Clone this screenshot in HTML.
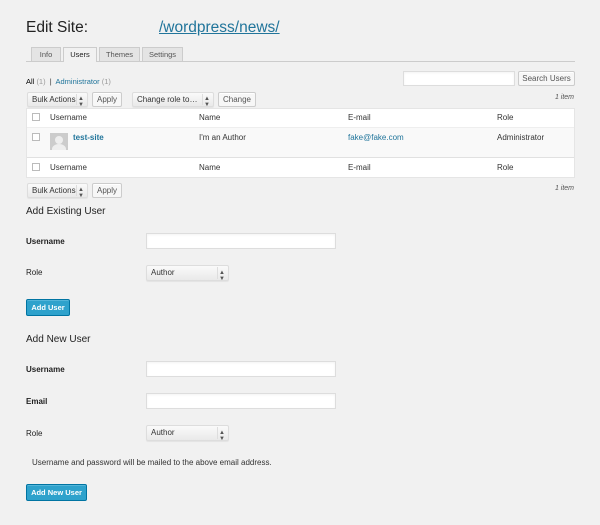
<!DOCTYPE html>
<html><head><style>
*{box-sizing:border-box;margin:0;padding:0}
body{width:600px;height:525px;background:#f1f1f1;font-family:"Liberation Sans",sans-serif;color:#333;position:relative;overflow:hidden;font-size:8px}
.a{position:absolute;white-space:nowrap}
.btn{position:absolute;background:#f7f7f7;border:1px solid #ccc;border-radius:2px;font-size:8px;color:#555;text-align:center;box-shadow:0 1px 0 #fff inset}
.sel{position:absolute;background:linear-gradient(#fafafa,#e9e9e9);border:1px solid #ddd;border-radius:2px;font-size:8px;color:#333;padding-left:4px;box-shadow:0 1px 1px rgba(0,0,0,.06)}
.sel:after{content:"";position:absolute;right:10px;top:1px;bottom:1px;border-left:1px solid #ddd}
.sel i{position:absolute;right:3px;top:0;font-style:normal;font-size:6px;line-height:6px;color:#555}
.inp{position:absolute;background:#fff;border:1px solid #ddd;box-shadow:inset 0 1px 2px rgba(0,0,0,.05)}
.tab{position:absolute;top:47px;height:14px;background:#e4e4e4;border:1px solid #ccc;border-bottom:none;font-size:7.5px;color:#555;text-align:center;line-height:13px}
.blue{position:absolute;background:#2ea2cc;border:1px solid #0074a2;border-radius:2px;color:#fff;font-size:7.5px;font-weight:bold;text-align:center;box-shadow:inset 0 1px 0 rgba(120,200,230,.5)}
.cb{position:absolute;width:8px;height:8px;border:1px solid #bbb;background:#fff}
.lbl{position:absolute;font-size:8px;font-weight:bold;color:#222}
</style></head><body>
<div class="a" style="left:26px;top:19px;font-size:15.5px;color:#222">Edit Site:</div>
<div class="a" style="left:159px;top:19px;font-size:15.5px;color:#21759b;text-decoration:underline">/wordpress/news/</div>
<div class="a" style="left:26px;top:61px;width:549px;border-top:1px solid #ccc"></div>
<div class="tab" style="left:31px;width:30px">Info</div>
<div class="tab" style="left:63px;width:34px;background:#f1f1f1;height:15px;color:#222">Users</div>
<div class="tab" style="left:99px;width:41px">Themes</div>
<div class="tab" style="left:142px;width:41px">Settings</div>
<div class="a" style="left:26px;top:77px;font-size:7.5px;color:#333"><b style="color:#000;font-weight:normal">All</b> <span style="color:#999">(1)</span> &nbsp;|&nbsp; <span style="color:#21759b">Administrator</span> <span style="color:#999">(1)</span></div>
<div class="inp" style="left:403px;top:71px;width:112px;height:15px"></div>
<div class="btn" style="left:518px;top:71px;width:57px;height:15px;line-height:13px">Search Users</div>
<div class="sel" style="left:27px;top:92px;width:61px;height:15px;line-height:13px">Bulk Actions<i style="top:3px">▲<br>▼</i></div>
<div class="btn" style="left:92px;top:92px;width:30px;height:15px;line-height:13px">Apply</div>
<div class="sel" style="left:132px;top:92px;width:82px;height:15px;line-height:13px">Change role to…<i style="top:3px">▲<br>▼</i></div>
<div class="btn" style="left:218px;top:92px;width:38px;height:15px;line-height:13px">Change</div>
<div class="a" style="right:26px;top:94px;font-size:7px;font-style:italic;color:#555">1 item</div>
<div class="a" style="left:26px;top:108px;width:549px;height:70px;background:#fff;border:1px solid #e5e5e5"></div>
<div class="a" style="left:27px;top:127px;width:547px;height:31px;background:#f9f9f9;border-top:1px solid #eee;border-bottom:1px solid #e1e1e1"></div>
<div class="cb" style="left:32px;top:113px"></div>
<div class="a" style="left:50px;top:113px">Username</div><div class="a" style="left:199px;top:113px">Name</div><div class="a" style="left:348px;top:113px">E-mail</div><div class="a" style="left:497px;top:113px">Role</div>
<div class="cb" style="left:32px;top:133px"></div>
<div class="a" style="left:50px;top:133px;width:18px;height:17px;background:#ccc;overflow:hidden"><div style="position:absolute;left:5px;top:3px;width:8px;height:8px;border-radius:50%;background:#eee"></div><div style="position:absolute;left:2px;top:11px;width:14px;height:10px;border-radius:50% 50% 0 0;background:#eee"></div></div>
<div class="a" style="left:73px;top:133px;color:#21759b;font-weight:bold">test-site</div>
<div class="a" style="left:199px;top:133px">I'm an Author</div>
<div class="a" style="left:348px;top:133px;color:#21759b">fake@fake.com</div>
<div class="a" style="left:497px;top:133px">Administrator</div>
<div class="cb" style="left:32px;top:163px"></div>
<div class="a" style="left:50px;top:163px">Username</div><div class="a" style="left:199px;top:163px">Name</div><div class="a" style="left:348px;top:163px">E-mail</div><div class="a" style="left:497px;top:163px">Role</div>
<div class="sel" style="left:27px;top:183px;width:61px;height:15px;line-height:13px">Bulk Actions<i style="top:3px">▲<br>▼</i></div>
<div class="btn" style="left:92px;top:183px;width:30px;height:15px;line-height:13px">Apply</div>
<div class="a" style="right:26px;top:185px;font-size:7px;font-style:italic;color:#555">1 item</div>
<div class="a" style="left:26px;top:206px;font-size:10px;color:#222">Add Existing User</div>
<div class="lbl" style="left:26px;top:237px">Username</div>
<div class="inp" style="left:146px;top:233px;width:190px;height:16px"></div>
<div class="a" style="left:26px;top:268px;color:#222">Role</div>
<div class="sel" style="left:146px;top:265px;width:83px;height:16px;line-height:14px">Author<i style="top:4px">▲<br>▼</i></div>
<div class="blue" style="left:26px;top:299px;width:44px;height:17px;line-height:15px">Add User</div>
<div class="a" style="left:26px;top:334px;font-size:10px;color:#222">Add New User</div>
<div class="lbl" style="left:26px;top:365px">Username</div>
<div class="inp" style="left:146px;top:361px;width:190px;height:16px"></div>
<div class="lbl" style="left:26px;top:397px">Email</div>
<div class="inp" style="left:146px;top:393px;width:190px;height:16px"></div>
<div class="a" style="left:26px;top:429px;color:#222">Role</div>
<div class="sel" style="left:146px;top:425px;width:83px;height:16px;line-height:14px">Author<i style="top:4px">▲<br>▼</i></div>
<div class="a" style="left:32px;top:458px;color:#333">Username and password will be mailed to the above email address.</div>
<div class="blue" style="left:26px;top:484px;width:61px;height:17px;line-height:15px">Add New User</div>
</body></html>
